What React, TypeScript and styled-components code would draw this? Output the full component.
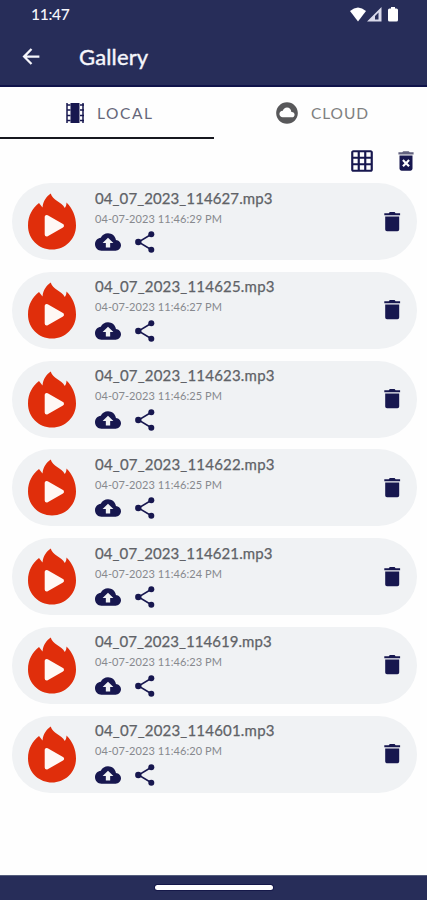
import React from 'react';
import styled, { createGlobalStyle } from 'styled-components';

const NAVY = '#272d59';
const INK = '#17174f';

const GlobalStyle = createGlobalStyle`
  *, *::before, *::after { box-sizing: border-box; }
  body { margin: 0; background: #fff; font-family: Lato, 'Open Sans', sans-serif; }
  svg { display: block; flex: none; }
`;

const Screen = styled.main`
  width: 427px;
  height: 900px;
  display: flex;
  flex-direction: column;
  overflow: hidden;
  background: #fefefe;
`;

const Header = styled.header`
  height: 87px;
  flex: none;
  background: ${NAVY};
  color: #f6f6fb;
  border-bottom: 2px solid #10134a;
`;

const StatusBar = styled.div`
  height: 29px;
  display: flex;
  align-items: center;
  justify-content: space-between;
  padding: 0 28px 0 31px;
`;

const Clock = styled.span`
  font-size: 15.5px;
  line-height: 29px;
  font-weight: 500;
  letter-spacing: -0.3px;
`;

const TitleBar = styled.div`
  height: 55px;
  display: flex;
  align-items: center;
  padding-left: 18px;
`;

const Title = styled.h1`
  margin: 0 0 0 34px;
  font-size: 22px;
  line-height: 28px;
  font-weight: 400;
  letter-spacing: 0.15px;
  -webkit-text-stroke: 0.4px;
`;

const Tabs = styled.nav`
  height: 52px;
  flex: none;
  display: grid;
  grid-template-columns: 214px 213px;
`;

const Tab = styled.div<{ $active?: boolean }>`
  display: flex;
  align-items: center;
  gap: ${(p) => (p.$active ? 12 : 11)}px;
  padding: 1px 0 0 ${(p) => (p.$active ? 65 : 60)}px;
  border-bottom: 2px solid ${(p) => (p.$active ? '#17181f' : 'transparent')};
  color: ${(p) => (p.$active ? '#66667a' : '#808080')};
  font-size: 15.5px;
  letter-spacing: ${(p) => (p.$active ? 1.6 : 0.9)}px;
`;

const Tools = styled.div`
  height: 44px;
  flex: none;
  display: flex;
  align-items: center;
  justify-content: flex-end;
  gap: 18px;
  padding-right: 8px;
  color: ${INK};
`;

const List = styled.ul`
  list-style: none;
  margin: 0;
  padding: 0 10px 0 12px;
  flex: 1;
  display: flex;
  flex-direction: column;
  gap: 11.8px;
`;

const Card = styled.li`
  height: 77px;
  flex: none;
  display: flex;
  align-items: center;
  padding: 0 12px 0 16px;
  border-radius: 39px;
  background: #f0f2f4;
  color: ${INK};
`;

const Details = styled.div`
  flex: 1;
  align-self: stretch;
  margin-left: 19px;
  padding-top: 5.500px;
`;

const FileName = styled.div<{ $tracking: number }>`
  font-size: 15px;
  line-height: 19px;
  letter-spacing: ${(p) => p.$tracking}px;
  color: #606267;
  -webkit-text-stroke: 0.25px;
  white-space: nowrap;
`;

const Stamp = styled.div`
  font-size: 11px;
  line-height: 14px;
  margin-top: 4px;
  letter-spacing: 0.07px;
  color: #87898e;
  white-space: nowrap;
`;

const Actions = styled.div`
  display: flex;
  gap: 11px;
  margin-top: 3.500px;
`;

const BottomBar = styled.footer`
  height: 25px;
  flex: none;
  display: flex;
  justify-content: center;
  align-items: center;
  padding-bottom: 2px;
  background: ${NAVY};
  border-top: 1px solid #545d7c;
`;

const HomeHandle = styled.div`
  width: 118px;
  height: 5px;
  border-radius: 3px;
  background: #fff;
  box-shadow: 0 0 0 1px #151849;
`;

const Glyph = ({ d, size = 26 }: { d: string; size?: number }) => (
  <svg width={size} height={size} viewBox="0 0 24 24" fill="currentColor">
    <path d={d} />
  </svg>
);

const UPLOAD =
  'M19.35 10.04C18.67 6.59 15.64 4 12 4 9.11 4 6.6 5.64 5.35 8.04 2.34 8.36 0 10.91 0 14c0 3.31 2.69 6 6 6h13c2.76 0 5-2.24 5-5 0-2.64-2.05-4.78-4.65-4.96zM14 13v4h-4v-4H7l5-5 5 5h-3z';
const TRASH_X =
  'M6 19c0 1.1.9 2 2 2h8c1.1 0 2-.9 2-2V7H6v12zm2.46-7.12 1.41-1.41L12 12.59l2.12-2.12 1.41 1.41L13.41 14l2.12 2.12-1.41 1.41L12 15.41l-2.12 2.12-1.41-1.41L10.59 14l-2.13-2.12z';
const TRASH_LID = 'M15.5 4l-1-1h-5l-1 1H5v2h14V4z';
const GRID =
  'M20 2H4c-1.1 0-2 .9-2 2v16c0 1.1.9 2 2 2h16c1.1 0 2-.9 2-2V4c0-1.1-.9-2-2-2zM8 20H4v-4h4v4zm0-6H4v-4h4v4zm0-6H4V4h4v4zm6 12h-4v-4h4v4zm0-6h-4v-4h4v4zm0-6h-4V4h4v4zm6 12h-4v-4h4v4zm0-6h-4v-4h4v4zm0-6h-4V4h4v4z';
const CLOUD_CIRCLE =
  'M12 2C6.48 2 2 6.48 2 12s4.48 10 10 10 10-4.48 10-10S17.52 2 12 2zm4.5 14H8c-1.66 0-3-1.34-3-3s1.34-3 3-3l.14.01C8.58 8.28 10.13 7 12 7c2.21 0 4 1.79 4 4h.5c1.38 0 2.5 1.12 2.5 2.5S17.88 16 16.5 16z';
const BACK = 'M19 11H7.830l4.900-4.900L11.300 4.700 4 12l7.300 7.300 1.410-1.410L7.830 13H19v-2z';

const ShareIcon = () => (
  <svg width="26" height="26" viewBox="0 0 26 26" fill="currentColor">
    <path d="M19 5.5 6.5 13 19 20.5" fill="none" stroke="currentColor" strokeWidth="1.5" />
    <circle cx="19.3" cy="5.2" r="3" />
    <circle cx="6.3" cy="13" r="3.2" />
    <circle cx="19.3" cy="20.7" r="3" />
  </svg>
);

const TrashIcon = () => (
  <svg width="26" height="26" viewBox="0 0 26 26" fill="currentColor">
    <path d="M5.300 4.200h4.500l1-1.200h4.800l1 1.200h4.500v2h-15.800ZM6.200 7.500h14v13q0 1.800-1.800 1.800H8q-1.800 0-1.800-1.800Z" />
  </svg>
);

const ClearAllIcon = () => (
  <svg width="26" height="26" viewBox="0 0 24 24" fill="currentColor">
    <path d={TRASH_X} />
    <path d={TRASH_LID} fill="#62627f" />
  </svg>
);

const CloudTabIcon = styled.span`
  color: #58585a;
`;

const FilmIcon = () => (
  <svg width="20" height="20" viewBox="0 0 20 20">
    <path d="M5.500 0h9v20h-9z" fill={INK} />
    <path
      d="M2 0v20M18 0v20M1.500 2h4M1.500 7h4M1.500 12.5h4M1.500 17.5h4M15 2h4M15 7h4M15 12.5h4M15 17.5h4"
      fill="none"
      stroke={INK}
      strokeWidth="1.5"
    />
  </svg>
);

const FlameIcon = () => (
  <svg width="48" height="57" viewBox="0 0 48 57">
    <path
      d="M22.700 0.500C18.500 3.500 15 8 14.500 14.500L11 10C4.500 15 0 22.500 0 32.500 0 46 10.500 56.500 24 56.500S48 46 48 32.500C48 23 44.500 15.500 38.500 9.500 38.500 11.500 38 13.500 36.800 15 33.500 8.500 24.500 7.500 22.700 0.500Z"
      fill="#e02e0b"
    />
    <path d="M18.700 24v17.500l15.300-8.700Z" fill="#fff8f5" stroke="#fff8f5" strokeWidth="4" strokeLinejoin="round" />
  </svg>
);

const StatusIcons = () => (
  <svg width="49" height="16" viewBox="0 0 49 16" fill="#fff">
    <path d="M0 4Q8-3 16 4L8 14.500Z" />
    <path fillRule="evenodd" d="M17 14.500 31.500 0v14.500ZM25 12.500h3.500V5.500L25 9Z" fill="#d9d9ea" />
    <path d="M41 0h4v1.500h1.500q1.500 0 1.500 1.500v10q0 1.500-1.500 1.500h-7Q38 14.500 38 13V3q0-1.500 1.500-1.500H41Z" />
  </svg>
);

const files = [
  { name: '04_07_2023_114627.mp3', time: '11:46:29', tracking: 0.1 },
  { name: '04_07_2023_114625.mp3', time: '11:46:27', tracking: 0.2 },
  { name: '04_07_2023_114623.mp3', time: '11:46:25', tracking: 0.2 },
  { name: '04_07_2023_114622.mp3', time: '11:46:25', tracking: 0.2 },
  { name: '04_07_2023_114621.mp3', time: '11:46:24', tracking: 0.1 },
  { name: '04_07_2023_114619.mp3', time: '11:46:23', tracking: 0.06 },
  { name: '04_07_2023_114601.mp3', time: '11:46:20', tracking: 0.2 },
];

export default function App() {
  return (
    <>
      <GlobalStyle />
      <Screen>
        <Header>
          <StatusBar>
            <Clock>11:47</Clock>
            <StatusIcons />
          </StatusBar>
          <TitleBar>
            <Glyph d={BACK} size={27} />
            <Title>Gallery</Title>
          </TitleBar>
        </Header>
        <Tabs>
          <Tab $active>
            <FilmIcon />
            LOCAL
          </Tab>
          <Tab>
            <CloudTabIcon>
              <Glyph d={CLOUD_CIRCLE} />
            </CloudTabIcon>
            CLOUD
          </Tab>
        </Tabs>
        <Tools>
          <Glyph d={GRID} />
          <ClearAllIcon />
        </Tools>
        <List>
          {files.map((file) => (
            <Card key={file.name}>
              <FlameIcon />
              <Details>
                <FileName $tracking={file.tracking}>{file.name}</FileName>
                <Stamp>04-07-2023 {file.time} PM</Stamp>
                <Actions>
                  <Glyph d={UPLOAD} />
                  <ShareIcon />
                </Actions>
              </Details>
              <TrashIcon />
            </Card>
          ))}
        </List>
        <BottomBar>
          <HomeHandle />
        </BottomBar>
      </Screen>
    </>
  );
}
